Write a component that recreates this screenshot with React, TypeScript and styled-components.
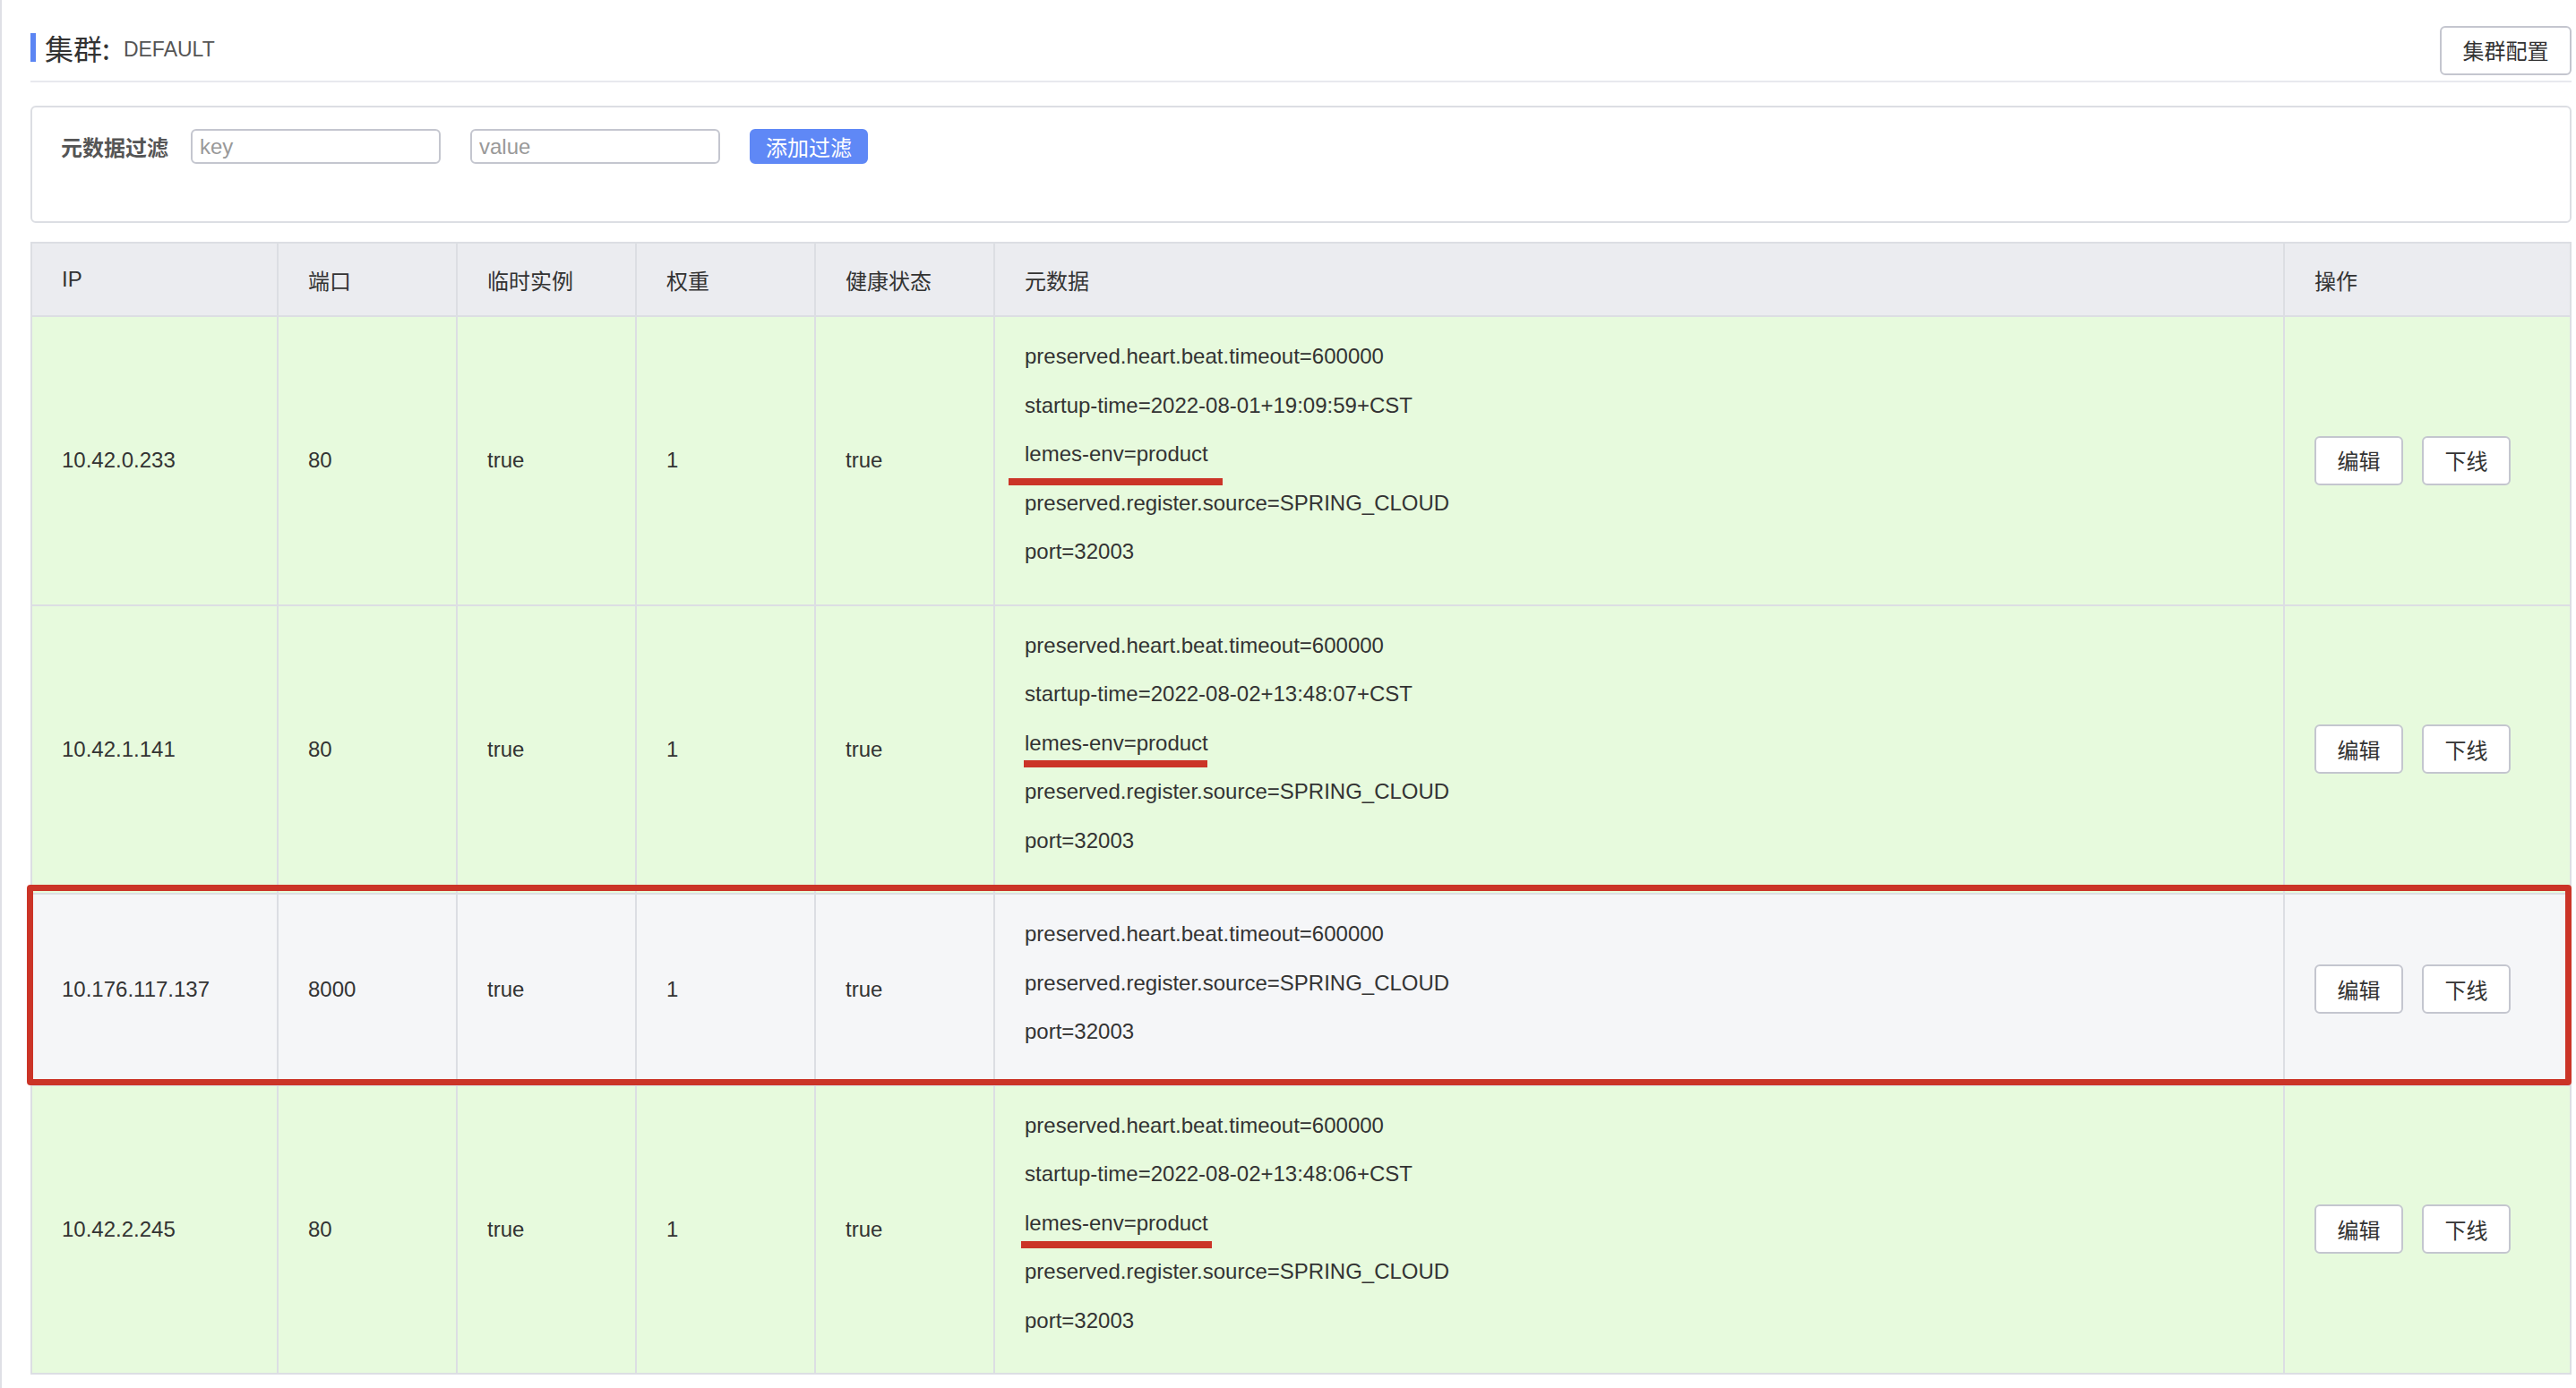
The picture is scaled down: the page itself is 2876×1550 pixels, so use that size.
import React from "react";
import styled, { createGlobalStyle, css } from "styled-components";

const GlobalStyle = createGlobalStyle`
  html, body {
    margin: 0;
    padding: 0;
    background: #ffffff;
  }
  body {
    font-family: "Liberation Sans", "Noto Sans CJK SC", Arial, sans-serif;
    color: #333333;
  }
  * { box-sizing: border-box; }
`;

const Page = styled.div`
  min-height: 1550px;
  border-left: 2px solid #dfe0e6;
  padding: 0 5px 16px 32px;
`;

const Header = styled.div`
  height: 92px;
  padding-top: 22px;
  display: flex;
  align-items: center;
  justify-content: space-between;
  border-bottom: 2px solid #e8e9ee;
`;

const Title = styled.div`
  align-self: flex-start;
  margin-top: 15px;
  height: 32px;
  display: flex;
  align-items: center;
  border-left: 6px solid #5b85f3;
  padding-left: 10px;
`;

const TitleMain = styled.span`
  font-family: "Noto Sans CJK SC", "Liberation Sans", sans-serif;
  font-size: 32px;
  line-height: 32px;
  color: #333333;
`;

const TitleSub = styled.span`
  font-family: "Liberation Sans", sans-serif;
  font-size: 23px;
  line-height: 32px;
  color: #555555;
  margin-left: 15px;
  margin-top: 4px;
`;

const Button = styled.button<{ $primary?: boolean; $w: number; $h: number }>`
  width: ${(p) => p.$w}px;
  height: ${(p) => p.$h}px;
  padding: 0;
  border-radius: 6px;
  font-family: "Noto Sans CJK SC", "Liberation Sans", sans-serif;
  font-size: 24px;
  line-height: 1;
  cursor: pointer;
  ${(p) =>
    p.$primary
      ? css`
          background: #5f88f6;
          border: 2px solid #5f88f6;
          color: #ffffff;
        `
      : css`
          background: #ffffff;
          border: 2px solid #c4c6cf;
          color: #333333;
        `}
`;

const FilterCard = styled.div`
  margin-top: 26px;
  height: 131px;
  border: 2px solid #dcdee3;
  border-radius: 6px;
  padding: 24px 32px;
  display: flex;
  align-items: flex-start;
`;

const FilterLabel = styled.span`
  font-family: "Noto Sans CJK SC", "Liberation Sans", sans-serif;
  font-size: 24px;
  font-weight: 700;
  color: #555555;
  line-height: 39px;
  margin-right: 25px;
`;

const FilterInput = styled.input`
  width: 279px;
  height: 39px;
  border: 2px solid #c4c6cf;
  border-radius: 6px;
  padding: 0 8px;
  margin-right: 33px;
  font-family: "Liberation Sans", sans-serif;
  font-size: 24px;
  color: #333333;
  background: #ffffff;
  outline: none;
  &::placeholder {
    color: #999999;
  }
`;

const Table = styled.div`
  margin-top: 21px;
  border: 2px solid #dcdee3;
`;

const gridCols = "275px 200px 200px 200px 200px 1fr 318px";

const HeadRow = styled.div`
  display: grid;
  grid-template-columns: ${gridCols};
  height: 82px;
  background: #ebecf0;
  border-bottom: 2px solid #dcdee3;
`;

const HeadCell = styled.div<{ $last?: boolean }>`
  display: flex;
  align-items: center;
  padding-left: 33px;
  font-size: 24px;
  color: #333333;
  border-right: ${(p) => (p.$last ? "none" : "2px solid #dcdee3")};
`;

const Row = styled.div<{ $tone: "green" | "gray"; $highlight?: boolean; $last?: boolean }>`
  position: relative;
  display: grid;
  grid-template-columns: ${gridCols};
  background: ${(p) => (p.$tone === "green" ? "#e7fadd" : "#f5f6f8")};
  border-bottom: ${(p) => (p.$last ? "none" : "2px solid #dcdee3")};
  ${(p) =>
    p.$highlight &&
    css`
      &::after {
        content: "";
        position: absolute;
        top: -11px;
        bottom: -1px;
        left: -6px;
        right: -2px;
        border: 7px solid #cb3427;
        border-radius: 4px;
        pointer-events: none;
        z-index: 2;
      }
    `}
`;

const Cell = styled.div<{ $last?: boolean }>`
  display: flex;
  align-items: center;
  padding-left: 33px;
  font-size: 24px;
  color: #333333;
  border-right: ${(p) => (p.$last ? "none" : "2px solid #dcdee3")};
`;

const MetaCell = styled(Cell)`
  display: block;
  padding-top: 17px;
  padding-bottom: 31px;
`;

const MetaLine = styled.div`
  position: relative;
  height: 54.5px;
  line-height: 54.5px;
  white-space: nowrap;
`;

const Mark = styled.span<{ $left: number; $width: number; $top: number }>`
  position: absolute;
  left: ${(p) => p.$left}px;
  top: ${(p) => p.$top}px;
  width: ${(p) => p.$width}px;
  height: 8px;
  background: #cb3427;
  pointer-events: none;
`;

const Actions = styled(Cell)`
  gap: 21px;
`;

type Instance = {
  ip: string;
  port: string;
  ephemeral: string;
  weight: string;
  healthy: string;
  meta: string[];
  mark?: { line: number; left: number; width: number; top: number };
  tone: "green" | "gray";
  highlight?: boolean;
};

const instances: Instance[] = [
  {
    ip: "10.42.0.233",
    port: "80",
    ephemeral: "true",
    weight: "1",
    healthy: "true",
    meta: [
      "preserved.heart.beat.timeout=600000",
      "startup-time=2022-08-01+19:09:59+CST",
      "lemes-env=product",
      "preserved.register.source=SPRING_CLOUD",
      "port=32003",
    ],
    mark: { line: 2, left: -18, width: 239, top: 54 },
    tone: "green",
  },
  {
    ip: "10.42.1.141",
    port: "80",
    ephemeral: "true",
    weight: "1",
    healthy: "true",
    meta: [
      "preserved.heart.beat.timeout=600000",
      "startup-time=2022-08-02+13:48:07+CST",
      "lemes-env=product",
      "preserved.register.source=SPRING_CLOUD",
      "port=32003",
    ],
    mark: { line: 2, left: -1, width: 205, top: 46 },
    tone: "green",
  },
  {
    ip: "10.176.117.137",
    port: "8000",
    ephemeral: "true",
    weight: "1",
    healthy: "true",
    meta: [
      "preserved.heart.beat.timeout=600000",
      "preserved.register.source=SPRING_CLOUD",
      "port=32003",
    ],
    tone: "gray",
    highlight: true,
  },
  {
    ip: "10.42.2.245",
    port: "80",
    ephemeral: "true",
    weight: "1",
    healthy: "true",
    meta: [
      "preserved.heart.beat.timeout=600000",
      "startup-time=2022-08-02+13:48:06+CST",
      "lemes-env=product",
      "preserved.register.source=SPRING_CLOUD",
      "port=32003",
    ],
    mark: { line: 2, left: -4, width: 213, top: 47 },
    tone: "green",
  },
];

const headers = ["IP", "端口", "临时实例", "权重", "健康状态", "元数据", "操作"];

export default function App() {
  return (
    <>
      <GlobalStyle />
      <Page>
        <Header>
          <Title>
            <TitleMain>集群:</TitleMain>
            <TitleSub>DEFAULT</TitleSub>
          </Title>
          <Button $w={147} $h={55}>集群配置</Button>
        </Header>

        <FilterCard>
          <FilterLabel>元数据过滤</FilterLabel>
          <FilterInput placeholder="key" />
          <FilterInput placeholder="value" />
          <Button $primary $w={132} $h={39}>添加过滤</Button>
        </FilterCard>

        <Table>
          <HeadRow>
            {headers.map((h, i) => (
              <HeadCell key={h} $last={i === headers.length - 1}>
                {h}
              </HeadCell>
            ))}
          </HeadRow>
          {instances.map((r, idx) => (
            <Row
              key={r.ip}
              $tone={r.tone}
              $highlight={r.highlight}
              $last={idx === instances.length - 1}
            >
              <Cell>{r.ip}</Cell>
              <Cell>{r.port}</Cell>
              <Cell>{r.ephemeral}</Cell>
              <Cell>{r.weight}</Cell>
              <Cell>{r.healthy}</Cell>
              <MetaCell>
                {r.meta.map((m, i) => (
                  <MetaLine key={m}>
                    {m}
                    {r.mark && r.mark.line === i && (
                      <Mark $left={r.mark.left} $width={r.mark.width} $top={r.mark.top} />
                    )}
                  </MetaLine>
                ))}
              </MetaCell>
              <Actions $last>
                <Button $w={99} $h={55}>编辑</Button>
                <Button $w={99} $h={55}>下线</Button>
              </Actions>
            </Row>
          ))}
        </Table>
      </Page>
    </>
  );
}
